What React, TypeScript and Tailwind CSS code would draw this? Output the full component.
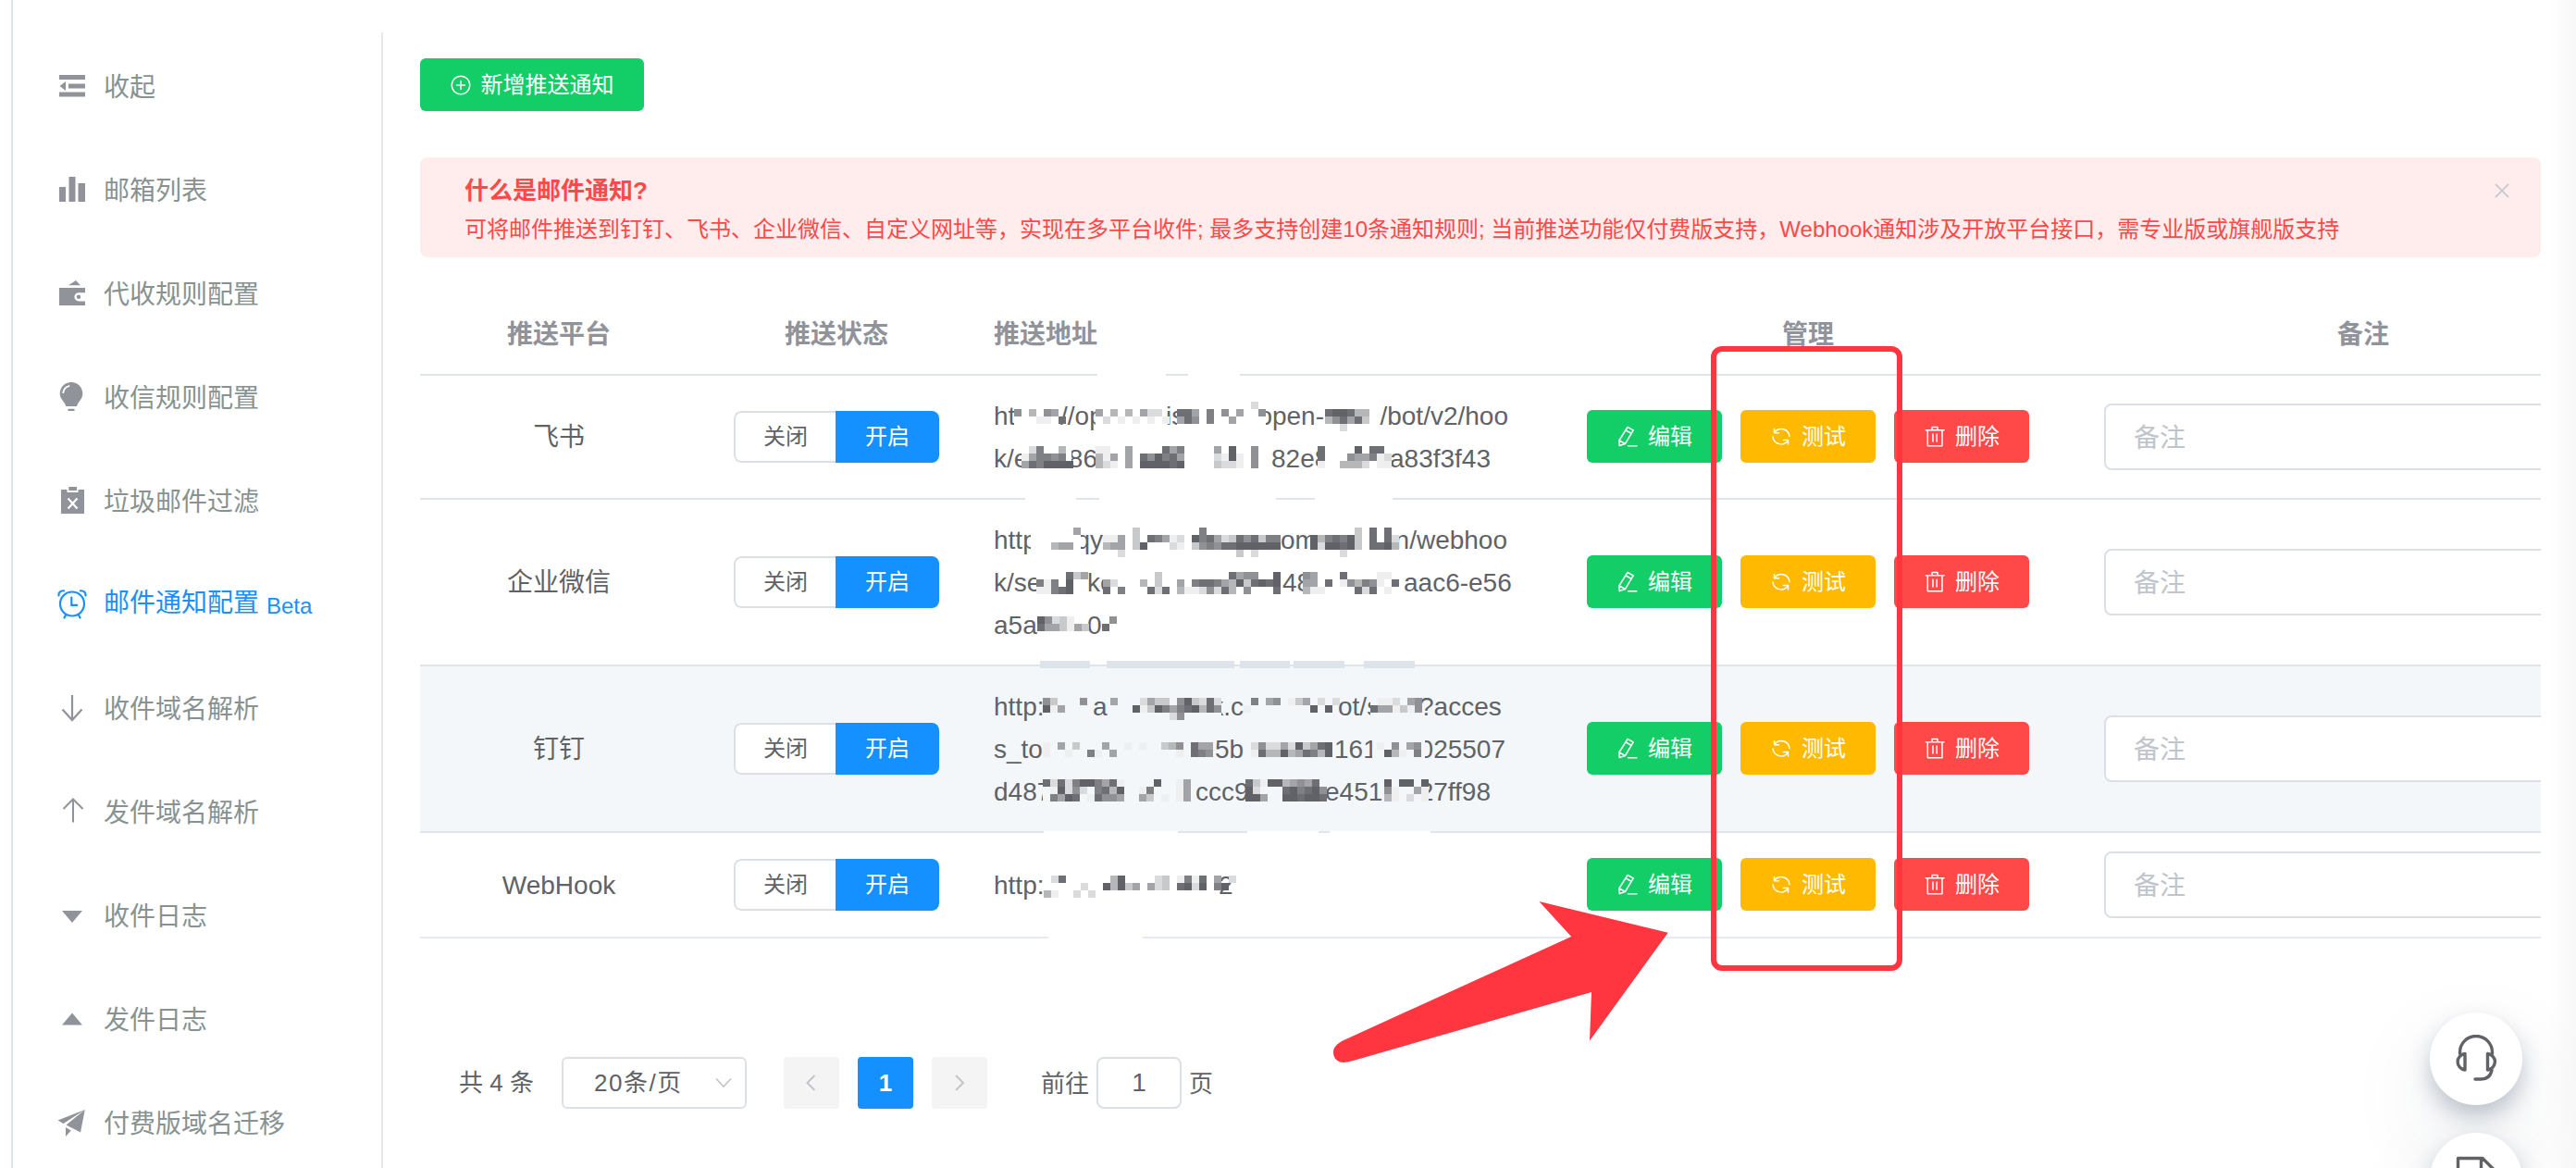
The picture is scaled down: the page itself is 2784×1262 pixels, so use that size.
import type { ReactNode } from 'react';

type Mosaic = { w: number; rows: string[]; dx?: number };
type Chunk = { w: number; text: string; end?: boolean } | Mosaic;

interface UrlLine {
  top: number;
  chunks: Chunk[];
}

interface Channel {
  name: string;
  height: string;
  active?: boolean;
  border: string;
  lines: UrlLine[];
  // [left, width] of the smudges on the bottom border, measured from the address cell
  smudges: [number, number][];
  smudge: string;
}

const SHADES = ['', '#efeff0', '#dadbdc', '#c8c9cb', '#b6b7b9', '#a3a4a7', '#909194', '#7e8084', '#6d6f74', '#606267'];

const channels: Channel[] = [
  {
    name: '飞书',
    height: 'h-[134px]',
    border: 'border-[#dfe5ea]',
    lines: [
      {
        top: 8,
        chunks: [
          { w: 22, text: 'ht' },
          { w: 50, rows: ['', '6.4.65.', '...11.8'] },
          { w: 38, text: '//op' },
          { w: 76, rows: ['', '5.4.4.522.', '.2.1.1.1.1'] },
          { w: 12, text: 'is' },
          { w: 96, rows: ['..........2', '885.7.6.5..6', '586.7..5....'] },
          { w: 63, text: 'open-', end: true },
          { w: 58, dx: 1, rows: ['', '899844', '468583', '..2...'] },
          { w: 141, text: '/bot/v2/hoo', end: true },
        ],
      },
      {
        top: 10,
        chunks: [
          { w: 30, text: 'k/e' },
          { w: 54, rows: ['.27..4.', '157767.', '5879999'] },
          { w: 28, text: '86', end: true },
          { w: 188, dx: -2, rows: ['11..5....857....5.9..6', '415.5.869785....2191.6', '421.5.999989....3221.6'] },
          { w: 52, text: '82e8' },
          { w: 76, dx: -2, rows: ['8....9.88.', '8...655712', '1..4442.11'] },
          { w: 130, text: 'a83f3f43' },
        ],
      },
    ],
    smudges: [[54, 55], [134, 191], [367, 84]],
    smudge: 'bottom-[-2px] h-[2px] bg-white',
  },
  {
    name: '企业微信',
    height: 'h-[180px]',
    border: 'border-[#dfe5ea]',
    lines: [
      {
        top: 10,
        chunks: [
          { w: 40, text: 'http' },
          { w: 54, dx: -2, rows: ['......5', '', '...455'] },
          { w: 24, text: 'qy', end: true },
          { w: 192, rows: ['....3........7', '115.3.87512.978523868377', '455.39...21.367688999999', '..2...............3.2'] },
          { w: 32, text: 'om' },
          { w: 95, rows: ['......3.8.8.', '9478793.8.82', '9299893.8894', '....2'] },
          { w: 118, text: 'n/webhoo', end: true },
        ],
      },
      {
        top: 12,
        chunks: [
          { w: 46, text: 'k/se' },
          { w: 55, rows: ['....835', '717.9..', '11789..'] },
          { w: 17, text: 'ke' },
          { w: 194, rows: ['.......3.........8566..9', '52...4.3..5.788754938989', '8.7...828.41126284.6...8'] },
          { w: 24, text: '48' },
          { w: 107, dx: -2, rows: ['65...8....11', '55.8.164761.8', '411....828.1'] },
          { w: 118, text: 'aac6-e56' },
        ],
      },
      {
        top: 14,
        chunks: [
          { w: 48, text: 'a5af' },
          { w: 53, dx: -1, rows: ['96231..', '8553153'] },
          { w: 16, text: '0' },
          { w: 16, rows: ['.6', '8.'] },
        ],
      },
    ],
    smudges: [[70, 54], [142, 138], [286, 54], [344, 55], [420, 55]],
    smudge: 'bottom-[-4px] h-[8px] bg-[#dde5eb]',
  },
  {
    name: '钉钉',
    height: 'h-[180px]',
    active: true,
    border: 'border-[#dfe5ea]',
    lines: [
      {
        top: 14,
        chunks: [
          { w: 53, text: 'http:' },
          { w: 54, rows: ['63...6', '915...'] },
          { w: 17, text: 'ap' },
          { w: 122, dx: 2, rows: ['5...2533.693282', '...913975789486', '........26'] },
          { w: 24, text: 'k.c', end: true },
          { w: 102, rows: ['.7.56.135.2.2', '1........9.9'] },
          { w: 35, text: 'ot/s' },
          { w: 53, rows: ['.112.56', '8551316'] },
          { w: 100, text: '?acces' },
        ],
      },
      {
        top: 16,
        chunks: [
          { w: 53, text: 's_to' },
          { w: 186, rows: ['1.5.3...5..1.1..346.855', '1..1..71.5........1.876'] },
          { w: 32, text: '5b' },
          { w: 97, dx: 7, rows: ['26225293589', '18449458749'] },
          { w: 41, text: '161' },
          { w: 57, dx: 5, rows: ['1.6.56', '.941.7'] },
          { w: 87, text: '025507', end: true },
        ],
      },
      {
        top: 10,
        chunks: [
          { w: 53, text: 'd487' },
          { w: 165, rows: ['82827997581....9..15', '.19262.7849..17...15', '.7598.18665..53.1.15'] },
          { w: 54, text: 'ccc9' },
          { w: 86, rows: ['8319945658.', '92...897896', '995..998998'] },
          { w: 62, text: 'e451' },
          { w: 50, dx: 2, rows: ['9.99.9', '61..51', '41.2.1'] },
          { w: 67, text: '27ff98', end: true },
        ],
      },
    ],
    smudges: [[74, 145], [294, 77], [383, 109]],
    smudge: 'bottom-[-2px] h-[2px] bg-white',
  },
  {
    name: 'WebHook',
    height: 'h-[114px]',
    border: 'border-[#e6eaf5]',
    lines: [
      {
        top: 13,
        chunks: [
          { w: 55, text: 'http:' },
          { w: 188, dx: -1, rows: ['.28......49....23.1718.5.2', '.....2..94935.523.8929.79', '41..2.2'] },
          { w: 16, text: '2' },
        ],
      },
    ],
    smudges: [[79, 102]],
    smudge: 'bottom-[-2px] h-[2px] bg-white',
  },
];

// Sits above the neighbouring text, so the letters run underneath it
function MosaicBlock({ w, rows, dx = 0, top }: Mosaic & { top: number }) {
  return (
    <svg
      className="relative z-10 shrink-0 overflow-visible bg-inherit"
      width={w}
      height={46}
      shapeRendering="crispEdges"
    >
      {rows.map((row, y) =>
        row.split('').map((c, x) =>
          c === '.' ? null : (
            <rect key={`${x}-${y}`} x={dx + x * 8} y={top + y * 8} width={8} height={8} fill={SHADES[Number(c)]} />
          ),
        ),
      )}
    </svg>
  );
}

function Address({ line }: { line: UrlLine }) {
  return (
    <div className="flex h-[46px] bg-inherit leading-[48px]">
      {line.chunks.map((chunk, i) =>
        'text' in chunk ? (
          <span
            key={i}
            className={`flex shrink-0 whitespace-nowrap ${chunk.end ? 'justify-end' : ''}`}
            style={{ width: chunk.w }}
          >
            {chunk.text}
          </span>
        ) : (
          <MosaicBlock key={i} {...chunk} top={line.top} />
        ),
      )}
    </div>
  );
}

function Glyph({ children }: { children: ReactNode }) {
  return (
    <svg className="size-8 shrink-0" viewBox="0 0 32 32" fill="currentColor">
      {children}
    </svg>
  );
}

function LineGlyph({ children }: { children: ReactNode }) {
  return (
    <svg
      className="size-6 shrink-0"
      viewBox="0 0 24 24"
      fill="none"
      stroke="currentColor"
      strokeWidth="1.5"
      strokeLinejoin="round"
      strokeLinecap="round"
    >
      {children}
    </svg>
  );
}

const menu: { label: string; beta?: boolean; icon: ReactNode }[] = [
  {
    label: '收起',
    icon: <path d="M2 4h28v5H2zM12 13.5h18v5H12zM2 22.5h28v5H2zM2.5 16l6.5-5v10z" />,
  },
  {
    label: '邮箱列表',
    icon: <path d="M2 13h7v16H2zM12.5 2h7v27h-7zM22.5 9h7.5v20h-7.5z" />,
  },
  {
    label: '代收规则配置',
    icon: (
      <>
        <path d="M12 7.2L20 2l5 5.2zM2 10h28v5.2h-7a4.6 4.6 0 000 9.2h7V29H2z" />
        <circle cx="23" cy="19.8" r="2.2" />
      </>
    ),
  },
  {
    label: '收信规则配置',
    icon: (
      <>
        <path d="M15 0c7 0 12.3 5.300 12.300 12.300 0 6-4.600 8.200-6.300 13.700H9.300C7.600 20.500 2.700 18.300 2.700 12.300 2.700 5.300 8 0 15 0zM11.500 28.800h7V31h-7z" />
        <path d="M6.200 12c.4-4.500 3-7.300 7-8.200" fill="none" stroke="white" strokeWidth="1.800" />
      </>
    ),
  },
  {
    label: '垃圾邮件过滤',
    icon: (
      <>
        <path d="M4 4h6.500v3h12V4H29v26H4zM12.300 1h8.700v4h-8.700z" />
        <path d="M11.500 13.500l10 11M21.500 13.500l-10 11" stroke="white" strokeWidth="2.200" />
      </>
    ),
  },
  {
    label: '邮件通知配置',
    beta: true,
    icon: (
      <g fill="none" stroke="currentColor" strokeWidth="2.2" strokeLinecap="round">
        <circle cx="16" cy="15.500" r="13" />
        <path d="M15.300 8.500v8.300h6M1.500 6.500C1 3.500 3.500 1 7 1.300M30.500 6.500C31 3.500 28.500 1 25 1.300M9 27.500L7.500 30.500M23 27.500l1.500 3" />
      </g>
    ),
  },
  {
    label: '收件域名解析',
    icon: <path d="M16 2v27M5.500 17.500L16 29l10.500-11.500" fill="none" stroke="currentColor" strokeWidth="2.200" />,
  },
  {
    label: '发件域名解析',
    icon: <path d="M17 27.500V2.500M6.500 13L17 2.500 27.500 13" fill="none" stroke="currentColor" strokeWidth="2" />,
  },
  { label: '收件日志', icon: <path d="M5 11h22L16 24z" /> },
  { label: '发件日志', icon: <path d="M5 22.500h22l-11-13z" /> },
  {
    label: '付费版域名迁移',
    icon: <path d="M.5 13.500L29.800 2 6.500 17zM29.800 2L25 26.500 9.500 18.500zM9 21l5.800 3.500L9 31z" />,
  },
];

function Sidebar() {
  return (
    <aside className="w-[400px] shrink-0 pl-12 pt-[37px]">
      {menu.map(({ label, beta, icon }) => (
        <div
          key={label}
          className={`flex h-28 items-center gap-[18px] text-[28px] ${beta ? 'text-[#1890ff]' : 'text-[#909399]'}`}
        >
          <Glyph>{icon}</Glyph>
          <span className={beta ? 'flex pt-px leading-[42px]' : 'pt-[3px] text-[#879291]'}>
            {label}
            {beta && <span className="ml-2 pt-[3px] text-2xl leading-[42px]">Beta</span>}
          </span>
        </div>
      ))}
    </aside>
  );
}

function ActionButton({ color, icon, label }: { color: string; icon: ReactNode; label: string }) {
  return (
    <button className={`flex h-[57px] w-[146px] items-center justify-center gap-[10px] rounded-md text-2xl text-white ${color}`}>
      <LineGlyph>{icon}</LineGlyph>
      {label}
    </button>
  );
}

function Alert() {
  return (
    <div className="mt-[50px] flex h-[108px] justify-between rounded-lg bg-[#ffecec] pl-12 pr-[34px] pt-[17px] text-[#ff4949]">
      <div>
        <p className="text-[26px] font-bold leading-[38px]">什么是邮件通知?</p>
        <p className="mt-[3px] whitespace-nowrap text-2xl leading-10">
          可将邮件推送到钉钉、飞书、企业微信、自定义网址等，实现在多平台收件; 最多支持创建10条通知规则; 当前推送功能仅付费版支持，Webhook通知涉及开放平台接口，需专业版或旗舰版支持
        </p>
      </div>
      <svg className="mt-[11px] size-4" viewBox="0 0 16 16" stroke="#c0c4cc" strokeWidth="1.6">
        <path d="M1 1l14 14M15 1L1 15" />
      </svg>
    </div>
  );
}

const COLUMNS = 'grid grid-cols-[300px_300px_600px_600px_600px]';

function ChannelRow({ row }: { row: Channel }) {
  return (
    <div className={`${COLUMNS} ${row.height} items-center border-b-2 ${row.border} ${row.active ? 'bg-[#f3f7fa]' : 'bg-white'}`}>
      <div className="pt-[2px] text-center">{row.name}</div>
      <div className="flex justify-center text-2xl">
        <div className="flex h-14 w-[222px] overflow-hidden rounded-lg">
          <span className="flex w-[110px] items-center justify-center rounded-l-lg border-2 border-r-0 border-[#dcdfe6] bg-white">
            关闭
          </span>
          <span className="flex w-[112px] items-center justify-center bg-[#1490ff] text-white">开启</span>
        </div>
      </div>
      <div className="relative flex h-full flex-col justify-center bg-inherit pl-5">
        {row.lines.map((line, i) => (
          <Address key={i} line={line} />
        ))}
        {row.smudges.map(([left, width]) => (
          <i key={left} className={`absolute z-10 ${row.smudge}`} style={{ left, width }} />
        ))}
      </div>
      <div className="flex justify-center gap-5 pb-px">
        <ActionButton
          color="bg-[#13ce66]"
          label="编辑"
          icon={<path d="M3.200 21.500L2.800 16 12 1.500l6.200 3.300L9.400 19.500zM10.200 5l6 3.400M3 15.800l6.400 3.700M12.500 21.700h9.300" />}
        />
        <ActionButton
          color="bg-[#ffba00]"
          label="测试"
          icon={<path d="M4.500 3.600v4.200h5M4.700 7.600A8.900 8.900 0 0121 11.500M19.500 20v-4.400h-5M19.300 15.800A8.900 8.900 0 013 12" />}
        />
        <ActionButton
          color="bg-[#ff4949]"
          label="删除"
          icon={<path d="M2.300 4.700h19.700M4.300 4.700v17h15.700v-17M9 4.500V1.600h6v2.900M10 9v8M14.200 9v8" />}
        />
      </div>
      <div className="px-5">
        <div className="flex h-[72px] items-center rounded-lg border-2 border-[#dcdfe6] bg-white pl-[30px] pt-[3px] text-[#c0c4cc]">
          备注
        </div>
      </div>
    </div>
  );
}

function ChannelTable() {
  return (
    <div className="mt-[38px] overflow-hidden text-[28px] text-[#606266]">
      <div className={`${COLUMNS} h-[90px] items-center border-b-2 border-[#dfe5ea] pt-[3px] text-center font-bold text-[#909399]`}>
        <div>推送平台</div>
        <div>推送状态</div>
        <div className="relative flex h-full items-center pl-5">
          推送地址
          <i className="absolute bottom-[-2px] left-[132px] h-[2px] w-[74px] bg-white" />
          <i className="absolute bottom-[-2px] left-[230px] h-[2px] w-14 bg-white" />
        </div>
        <div>管理</div>
        <div>备注</div>
      </div>
      {channels.map((row) => (
        <ChannelRow key={row.name} row={row} />
      ))}
    </div>
  );
}

function Pagination() {
  return (
    <div className="mt-32 flex h-14 items-center pl-[42px] text-[26px] text-[#606266]">
      <span className="w-[111px]">共 4 条</span>
      <div className="flex h-14 w-[200px] items-center justify-between rounded-md border-2 border-[#dcdfe6] pl-[33px] pr-[14px]">
        <span className="tracking-[1.5px]">20条/页</span>
        <svg className="h-3 w-[18px]" viewBox="0 0 18 12" fill="none" stroke="#c0c4cc" strokeWidth="1.6">
          <path d="M1 1.500l8 8.500 8-8.500" />
        </svg>
      </div>
      <div className="ml-10 flex gap-5">
        <button className="flex h-14 w-[60px] items-center justify-center rounded bg-[#f4f4f5]">
          <svg className="h-[18px] w-3" viewBox="0 0 12 18" fill="none" stroke="#c0c4cc" strokeWidth="2">
            <path d="M9.500 1L1.500 9l8 8" />
          </svg>
        </button>
        <button className="h-14 w-[60px] rounded bg-[#1490ff] font-bold text-white">1</button>
        <button className="flex h-14 w-[60px] items-center justify-center rounded bg-[#f4f4f5]">
          <svg className="h-[18px] w-3" viewBox="0 0 12 18" fill="none" stroke="#c0c4cc" strokeWidth="2">
            <path d="M2 1l8 8-8 8" />
          </svg>
        </button>
      </div>
      <span className="ml-[58px] pt-0.5">前往</span>
      <span className="ml-2 flex h-14 w-[92px] items-center justify-center rounded-lg border-2 border-[#dcdfe6] text-[28px]">
        1
      </span>
      <span className="ml-2 pt-0.5">页</span>
    </div>
  );
}

function FloatingTools() {
  const round =
    'flex size-[100px] items-center justify-center rounded-full bg-white text-[#606266] shadow-[0_12px_24px_rgba(40,60,90,0.28),0_40px_100px_rgba(40,60,90,0.1)]';

  return (
    <div className="absolute left-[2626px] top-[1094px] flex flex-col gap-[30px]">
      <div className={round}>
        <svg className="size-[52px]" viewBox="0 0 52 52" fill="none" stroke="currentColor" strokeWidth="3.4" strokeLinecap="round" strokeLinejoin="round">
          <path d="M8.500 20.500v-1.500a17.500 17.500 0 0135 0v1.500M14 20.500v17.500A8.800 8.800 0 0114 20.500zM38.500 20.500v17.500a8.800 8.800 0 000-17.500zM43 38.500c-1.500 6.500-6 9.500-11.500 9.500H25" />
        </svg>
      </div>
      <div className={round}>
        <svg className="size-[52px]" viewBox="0 0 52 52" fill="none" stroke="currentColor" strokeWidth="3.4" strokeLinejoin="round">
          <path d="M6.500 3.500h26.500l13 13V49H6.500zM31.500 3.500V18H46" />
        </svg>
      </div>
    </div>
  );
}

function Annotations() {
  return (
    <>
      <div className="absolute left-[1849px] top-[374px] h-[675px] w-[207px] rounded-xl border-[6px] border-[#ff3540]" />
      <svg className="absolute left-[1430px] top-[960px]" width="390" height="200" fill="#ff3540">
        <path d="M372.700 47.700L233.400 14l34.800 38L22.700 163.700C14 168 11 172 11 177c0 8 7 12.500 15 10.500L32.500 186 290 112l-2 52.500z" />
      </svg>
    </>
  );
}

export default function App() {
  return (
    <div className="relative flex h-[1262px] w-[2784px] overflow-hidden bg-white font-['Liberation_Sans','Noto_Sans_CJK_SC',sans-serif] leading-normal">
      <div className="ml-3 w-[2px] shrink-0 bg-[#dde4ee]" />
      <Sidebar />
      <div className="mt-[35px] -ml-[2px] w-[2px] shrink-0 bg-[#e6e7ea]" />
      <main className="ml-10 w-[2292px] shrink-0 pt-[63px]">
        <button className="flex h-[57px] w-[242px] items-center justify-center gap-[9px] rounded-md bg-[#13ce66] text-2xl text-white">
          <LineGlyph>
            <circle cx="11" cy="12" r="9.800" />
            <path d="M11 7.500v9M6.500 12h9" />
          </LineGlyph>
          新增推送通知
        </button>
        <Alert />
        <ChannelTable />
        <Pagination />
      </main>
      <div className="ml-2 flex-1 bg-linear-to-r from-white to-[#f8f8f8]" />
      <FloatingTools />
      <Annotations />
    </div>
  );
}
